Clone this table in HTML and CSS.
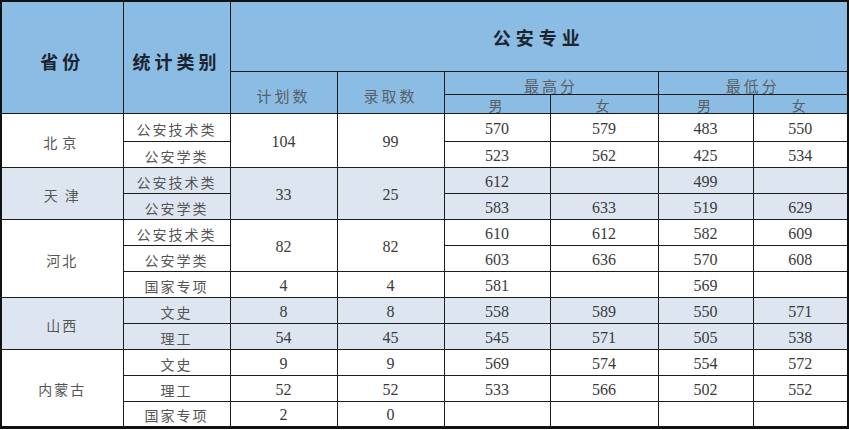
FILE: index.html
```
<!DOCTYPE html>
<html lang="zh">
<head>
<meta charset="utf-8">
<link rel="stylesheet" href="styles.css">
</head>
<body>
<table class="score">
<colgroup>
<col class="c1"><col class="c2"><col class="c3"><col class="c4"><col class="c5"><col class="c6"><col class="c7"><col class="c8">
</colgroup>
<thead>
<tr class="h1">
<th rowspan="3" class="title">省份</th>
<th rowspan="3" class="title">统计类别</th>
<th colspan="6" class="title major">公安专业</th>
</tr>
<tr class="h2">
<th rowspan="2" class="sub tall">计划数</th>
<th rowspan="2" class="sub tall">录取数</th>
<th colspan="2" class="sub">最高分</th>
<th colspan="2" class="sub">最低分</th>
</tr>
<tr class="h3">
<th class="sub">男</th><th class="sub">女</th><th class="sub">男</th><th class="sub">女</th>
</tr>
</thead>
<tbody class="white">
<tr class="first"><td rowspan="2" class="prov wide">北京</td><td class="cat">公安技术类</td><td rowspan="2">104</td><td rowspan="2">99</td><td>570</td><td>579</td><td>483</td><td>550</td></tr>
<tr><td class="cat">公安学类</td><td>523</td><td>562</td><td>425</td><td>534</td></tr>
</tbody>
<tbody class="tint">
<tr><td rowspan="2" class="prov">天 津</td><td class="cat">公安技术类</td><td rowspan="2">33</td><td rowspan="2">25</td><td>612</td><td></td><td>499</td><td></td></tr>
<tr><td class="cat">公安学类</td><td>583</td><td>633</td><td>519</td><td>629</td></tr>
</tbody>
<tbody class="white">
<tr><td rowspan="3" class="prov">河北</td><td class="cat">公安技术类</td><td rowspan="2">82</td><td rowspan="2">82</td><td>610</td><td>612</td><td>582</td><td>609</td></tr>
<tr><td class="cat">公安学类</td><td>603</td><td>636</td><td>570</td><td>608</td></tr>
<tr><td class="cat">国家专项</td><td>4</td><td>4</td><td>581</td><td></td><td>569</td><td></td></tr>
</tbody>
<tbody class="tint">
<tr><td rowspan="2" class="prov">山西</td><td class="cat">文史</td><td>8</td><td>8</td><td>558</td><td>589</td><td>550</td><td>571</td></tr>
<tr><td class="cat">理工</td><td>54</td><td>45</td><td>545</td><td>571</td><td>505</td><td>538</td></tr>
</tbody>
<tbody class="white">
<tr><td rowspan="3" class="prov">内蒙古</td><td class="cat">文史</td><td>9</td><td>9</td><td>569</td><td>574</td><td>554</td><td>572</td></tr>
<tr><td class="cat">理工</td><td>52</td><td>52</td><td>533</td><td>566</td><td>502</td><td>552</td></tr>
<tr><td class="cat">国家专项</td><td>2</td><td>0</td><td></td><td></td><td></td><td></td></tr>
</tbody>
</table>
</body>
</html>
```
FILE: styles.css
```
html, body {
  margin: 0;
  padding: 0;
  background: #ffffff;
}
.score {
  width: 849px;
  table-layout: fixed;
  border-collapse: collapse;
  border-top: 2px solid #111;
  border-left: 2px solid #111;
  border-right: 2px solid #111;
  border-bottom: 3px solid #111;
  font-family: "Liberation Serif", "Noto Sans CJK SC", serif;
  color: #3a3a3a;
}
.c1 { width: 122px; }
.c2 { width: 107px; }
.c3 { width: 107px; }
.c4 { width: 107px; }
.c5 { width: 106px; }
.c6 { width: 108px; }
.c7 { width: 95px; }
.c8 { width: 95px; }
th, td {
  border: 1px solid #1c1c1c;
  padding: 0;
  text-align: center;
  vertical-align: middle;
  white-space: nowrap;
  overflow: hidden;
}
thead th {
  background: #8bbde4;
}
.h1 { height: 70px; }
.h2 { height: 23px; }
.h3 { height: 19px; }
tbody tr { height: 26px; }
tbody tr.first { height: 28px; }
.title {
  font-family: "Noto Sans CJK SC", sans-serif;
  font-weight: 700;
  font-size: 18px;
  letter-spacing: 4px;
  color: #1c2430;
  padding-top: 8px;
}
.major {
  padding-top: 2px;
  padding-bottom: 0;
  letter-spacing: 5px;
}
.sub {
  font-family: "Noto Sans CJK SC", sans-serif;
  font-weight: 400;
  font-size: 15px;
  letter-spacing: 3px;
  color: #5a5f66;
  line-height: 17px;
  padding-top: 5px;
}
.sub.tall {
  padding-top: 6px;
}
.h3 .sub {
  font-size: 14px;
  line-height: 15px;
  padding-top: 3px;
}
td {
  font-size: 16px;
  line-height: 18px;
  padding-top: 3px;
}
.prov, .cat {
  font-family: "Noto Sans CJK SC", sans-serif;
  font-weight: 400;
  letter-spacing: 2px;
  color: #555555;
  font-size: 14px;
}
.prov.wide {
  letter-spacing: 5px;
}
.tint td {
  background: #dde6f0;
}
.white td {
  background: #ffffff;
}
```
